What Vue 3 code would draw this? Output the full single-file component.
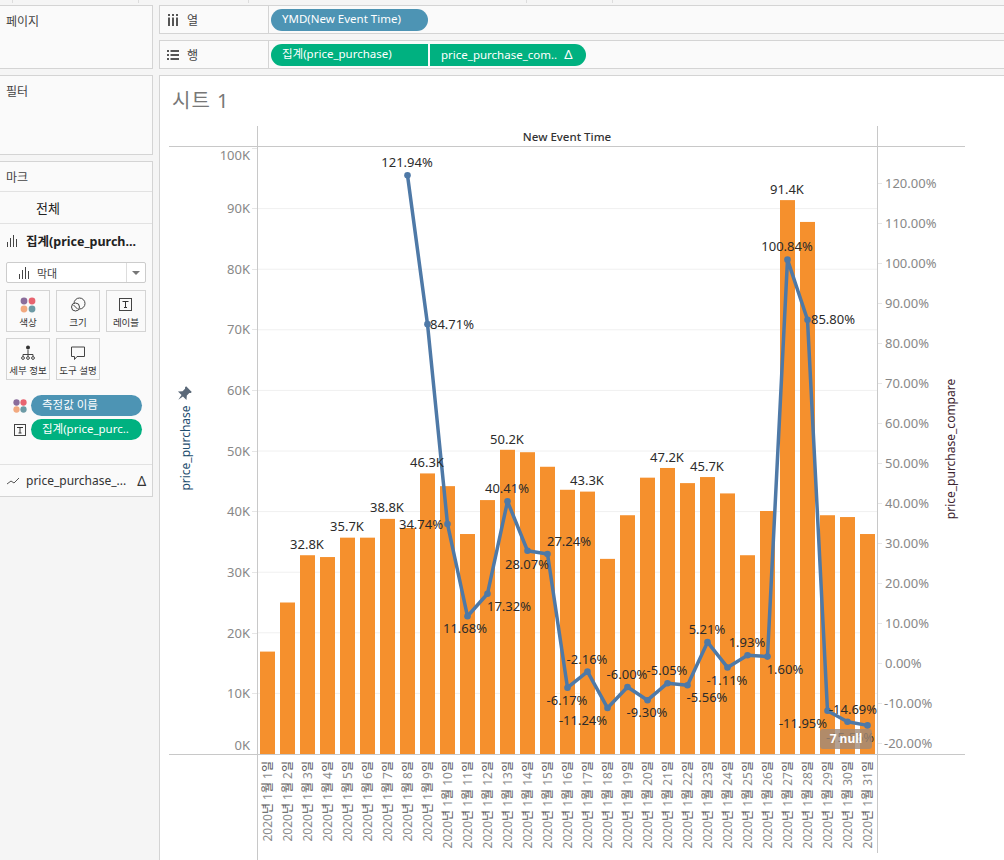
<script setup>
const KO = 60.6 / 10000
const base = 754
const values = [16900,25000,32800,32500,35700,35700,38800,37300,46300,44200,36300,41900,50200,49800,47400,43600,43300,32200,39400,45600,47200,44700,45700,43000,32800,40100,91400,87800,39400,39100,36300]
const bars = values.map((v, i) => ({ x: 260 + i * 20, y: base - v * KO, h: v * KO }))
const linePct = [121.94,84.71,34.74,11.68,17.32,40.41,28.07,27.24,-6.17,-2.16,-11.24,-6,-9.3,-5.05,-5.56,5.21,-1.11,1.93,1.6,100.84,85.8,-11.95,-14.69,-15.6]
const points = linePct.map((p, i) => ({ x: 407.5 + i * 20, y: 663 - p * 4 }))
const linePath = points.map(p => `${p.x},${p.y}`).join(' ')
const leftTicks = [['100K',155,148],['90K',208,208],['80K',269,269],['70K',329,329],['60K',390,390],['50K',451,451],['40K',511,511],['30K',572,572],['20K',633,633],['10K',693,693],['0K',745,754]]
const grid = [1,2,3,4,5,6,7,8,9].map(n => base - n * 60.6)
const rightTicks = [120,110,100,90,80,70,60,50,40,30,20,10,0,-10,-20].map(p => ({ t: p.toFixed(2) + '%', y: 663 - p * 4 }))
const labels = [
  ['32.8K',307,545],['35.7K',347,527],['38.8K',387,508],['46.3K',427,463],['50.2K',507,440],['43.3K',587,481],['47.2K',667,458],['45.7K',707,467],['91.4K',787,190],
  ['121.94%',407,163],['84.71%',452,325],['34.74%',421,525],['11.68%',465,629],['17.32%',509,607],['40.41%',507,489],['28.07%',527,565],['27.24%',569,542],
  ['-6.17%',567,701],['-2.16%',587,660],['-11.24%',583,721],['-6.00%',627,675],['-9.30%',647,713],['-5.05%',667,671],['-5.56%',707,698],['5.21%',707,630],['-1.11%',727,681],['1.93%',747,643],['1.60%',785,670],['-11.95%',803,724],['100.84%',787,247],['85.80%',833,320],['-14.69%',853,710]
]
const days = Array.from({ length: 31 }, (_, i) => ({ x: 267.5 + i * 20, d: i + 1 }))
const swatches = ['#8a6d9b', '#e8636f', '#f2a97f', '#6c9aa5']
</script>

<template>
  <div class="page">
    <div class="strip"><i></i><i></i><i></i><i></i><i></i></div>
    <div class="main">
      <aside class="side">
        <section class="panel pages"><h4>페이지</h4></section>
        <section class="panel filters"><h4>필터</h4></section>
        <section class="panel marks">
          <h4 class="marks-head">마크</h4>
          <div class="all">전체</div>
          <div class="agg">
            <svg width="12" height="14" viewBox="0 0 12 14"><path d="M1.500 8v5M4.500 4v9M7.500 1v12M10.500 5v8" stroke="#444" fill="none"/></svg>
            <b>집계(price_purch...</b>
          </div>
          <div class="mark-body">
            <div class="select">
              <svg width="12" height="14" viewBox="0 0 12 14"><path d="M1.500 8v5M4.500 4v9M7.500 1v12M10.500 5v8" stroke="#444" fill="none"/></svg>
              <span>막대</span>
              <em><u></u></em>
            </div>
            <div class="cards">
              <div class="card">
                <svg width="16" height="16" viewBox="0 0 16 16"><circle v-for="(c, n) in swatches" :key="c" :cx="4 + (n % 2) * 8" :cy="4 + (n > 1 ? 8 : 0)" r="3.4" :fill="c"/></svg>
                <span>색상</span>
              </div>
              <div class="card">
                <svg width="16" height="16" viewBox="0 0 16 16"><circle cx="9.5" cy="6.5" r="5.5" fill="none" stroke="#444"/><circle cx="5.5" cy="10" r="4" fill="#fafafa" stroke="#444"/><path d="M3.5 8l4 4" stroke="#444"/></svg>
                <span>크기</span>
              </div>
              <div class="card">
                <svg width="16" height="16" viewBox="0 0 16 16"><rect x="1.5" y="1.5" width="12" height="12" fill="none" stroke="#444"/><path d="M4.5 4.5h6M7.500 4.500v6M6 10.500h3" stroke="#333" fill="none"/></svg>
                <span>레이블</span>
              </div>
              <div class="card">
                <svg width="16" height="16" viewBox="0 0 16 16"><circle cx="8" cy="2.500" r="2" fill="#333"/><path d="M8 5v4M3 9.500h10M3 9.500v2M8 9.500v2M13 9.500v2" stroke="#444" fill="none"/><circle cx="3" cy="13" r="1.400" fill="none" stroke="#444"/><circle cx="8" cy="13" r="1.400" fill="none" stroke="#444"/><circle cx="13" cy="13" r="1.400" fill="none" stroke="#444"/></svg>
                <span>세부 정보</span>
              </div>
              <div class="card">
                <svg width="16" height="16" viewBox="0 0 16 16"><path d="M1.500 2h13v9.500H7l-2.500 3v-3h-3z" fill="none" stroke="#444"/></svg>
                <span>도구 설명</span>
              </div>
            </div>
            <div class="enc">
              <svg width="14" height="14" viewBox="0 0 16 16"><circle v-for="(c, n) in swatches" :key="c" :cx="4 + (n % 2) * 8" :cy="4 + (n > 1 ? 8 : 0)" r="3.6" :fill="c"/></svg>
              <span class="pill blue">측정값 이름</span>
            </div>
            <div class="enc">
              <svg width="14" height="14" viewBox="0 0 14 14"><rect x="1.500" y="1.500" width="11" height="11" fill="none" stroke="#444"/><path d="M4 4.500h6M7 4.500v5.500M5.500 10h3" stroke="#333" fill="none"/></svg>
              <span class="pill green">집계(price_purc..</span>
            </div>
          </div>
          <div class="line-row">
            <svg width="14" height="10" viewBox="0 0 14 10"><path d="M1 8l4-3 3 2 5-5" stroke="#555" fill="none"/></svg>
            <span>price_purchase_...</span>
            <span class="delta">Δ</span>
          </div>
        </section>
      </aside>
      <div class="content">
        <div class="shelf">
          <div class="shelf-name">
            <svg width="12" height="12" viewBox="0 0 12 12"><path d="M1 0h2v2H1zM5 0h2v2H5zM9 0h2v2H9zM1 3.500h2V12H1zM5 3.500h2V12H5zM9 3.500h2V12H9z" fill="#555"/></svg>
            <span>열</span>
          </div>
          <div class="shelf-pills"><span class="pill blue wide">YMD(New Event Time)</span></div>
        </div>
        <div class="shelf">
          <div class="shelf-name">
            <svg width="12" height="12" viewBox="0 0 12 12"><path d="M0 1h2v2H0zM3.500 1H12v2H3.500zM0 5h2v2H0zM3.500 5H12v2H3.500zM0 9h2v2H0zM3.500 9H12v2H3.500z" fill="#555"/></svg>
            <span>행</span>
          </div>
          <div class="shelf-pills">
            <span class="pill green wide join-r">집계(price_purchase)</span>
            <span class="pill green wide join-l">price_purchase_com.. <span>Δ</span></span>
          </div>
        </div>
        <main class="sheet">
          <h2>시트 1</h2>
          <svg class="chart" width="845" height="734" viewBox="159 126 845 734">
            <line v-for="g in grid" :key="g" x1="257" x2="877" :y1="g" :y2="g" stroke="#f0f0f0"/>
            <line v-for="t in leftTicks" :key="'l' + t[0]" x1="252" x2="257" :y1="t[2] + 0.5" :y2="t[2] + 0.5" stroke="#e6e6e6"/>
            <line v-for="t in rightTicks" :key="'r' + t.t" x1="878" x2="882" :y1="t.y + 0.5" :y2="t.y + 0.5" stroke="#e6e6e6"/>
            <rect v-for="(b, i) in bars" :key="i" :x="b.x" :y="b.y" width="15" :height="b.h" fill="#f5902d"/>
            <path d="M169 146.500H965M169 754.500H965M257.500 126V860M877.500 126V853" stroke="#c8c8c8" fill="none"/>
            <text x="567" y="141" text-anchor="middle" class="head">New Event Time</text>
            <text v-for="t in leftTicks" :key="t[0]" x="250" :y="t[1] + 5" text-anchor="end" class="tick">{{ t[0] }}</text>
            <text v-for="t in rightTicks" :key="t.t" :x="t.t[0] === '-' ? 884 : 885" :y="t.y + 5" class="tick">{{ t.t }}</text>
            <text text-anchor="middle" class="title-l" transform="translate(190 448) rotate(-90)">price_purchase</text>
            <text text-anchor="middle" class="title-r" transform="translate(955 449) rotate(-90)">price_purchase_compare</text>
            <path d="M-4-7H4V-5.500L3-4.500V-1L6 2.500H1L0 8-1 2.500H-6L-3-1V-4.500L-4-5.500Z" fill="#5a6878" transform="translate(184 394) rotate(45)"/>
            <text v-for="d in days" :key="d.d" :transform="`translate(${d.x + 4.500} 761) rotate(-90)`" text-anchor="end" class="day">2020<tspan class="ko">년</tspan> 1<tspan class="ko">월</tspan> {{ d.d }}<tspan class="ko">일</tspan></text>
            <polyline :points="linePath" fill="none" stroke="#4e79a7" stroke-width="3.5" stroke-linejoin="round"/>
            <circle v-for="(p, i) in points" :key="i" :cx="p.x" :cy="p.y" r="3.300" fill="#4e79a7"/>
            <text x="850" y="742" text-anchor="middle" class="val">-15.56%</text>
            <text v-for="l in labels" :key="l[0]" :x="l[1]" :y="l[2] + 4" text-anchor="middle" class="val">{{ l[0] }}</text>
            <rect x="820" y="729" width="52" height="20" rx="3" fill="#a08a78" fill-opacity="0.8"/>
            <text x="846" y="743" text-anchor="middle" class="nulls">7 null</text>
          </svg>
        </main>
      </div>
    </div>
  </div>
</template>

<style>
html, body { margin: 0; background: #f5f5f5; }
</style>

<style scoped>
.page {
  width: 1004px;
  height: 860px;
  overflow: hidden;
  background: #f5f5f5;
  font-family: "Noto Sans", "Noto Sans CJK KR", sans-serif;
  font-size: 12px;
  color: #333;
}
.strip { height: 3px; display: flex; padding-left: 12px; margin-bottom: 2px; }
.strip i { border-left: 1px solid #ddd; box-sizing: border-box; }
.strip i:nth-child(1) { width: 126px; }
.strip i:nth-child(2) { width: 110px; }
.strip i:nth-child(3) { width: 278px; }
.strip i:nth-child(4) { width: 86px; }
.strip i:nth-child(5) { width: 10px; }
.main { display: flex; gap: 6px; height: 855px; }
.side { width: 153px; display: flex; flex-direction: column; gap: 6px; flex: none; }
.panel { background: #fafafa; border: 1px solid #d4d4d4; border-left: 0; box-sizing: border-box; }
.panel h4 { margin: 0; font-weight: 400; font-size: 12px; padding: 8px 6px 0; line-height: 16px; color: #444; }
.pages { height: 64px; }
.filters { height: 80px; }
.marks { height: 336px; display: flex; flex-direction: column; }
.marks-head { height: 30px; box-sizing: border-box; border-bottom: 1px solid #e2e2e2; }
.all { height: 32px; line-height: 32px; box-sizing: border-box; padding-left: 36px; border-bottom: 1px solid #e2e2e2; color: #222; font-size: 13px; }
.agg { height: 33px; display: flex; align-items: center; gap: 8px; padding-left: 6px; color: #222; font-size: 12.500px; white-space: nowrap; }
.agg svg { flex: none; }
.mark-body { padding: 5px 6px 0; height: 208px; box-sizing: border-box; border-bottom: 1px solid #e2e2e2; }
.select { height: 21px; margin-bottom: 7px; box-sizing: border-box; border: 1px solid #ccc; border-radius: 2px; background: #fff; display: flex; align-items: center; font-size: 11px; padding-left: 11px; gap: 7px; }
.select span { flex: 1; color: #444; }
.select em { width: 18px; height: 100%; border-left: 1px solid #ddd; display: flex; align-items: center; justify-content: center; }
.select u { width: 0; height: 0; border: 4px solid transparent; border-top: 4px solid #777; border-bottom: 0; }
.cards { display: grid; grid-template-columns: 44px 44px 40px; gap: 6px; }
.card { height: 42px; box-sizing: border-box; border: 1px solid #d4d4d4; display: flex; flex-direction: column; align-items: center; padding-top: 6px; font-size: 9.500px; line-height: 13px; gap: 3px; white-space: nowrap; color: #333; }
.card svg { flex: none; }
.enc { display: flex; align-items: center; gap: 4px; margin-left: 7px; height: 21px; margin-top: 3px; }
.cards + .enc { margin-top: 15px; }
.enc svg { flex: none; }
.pill { color: #fff; border-radius: 11px; white-space: nowrap; display: block; }
.enc .pill { width: 111px; height: 21px; line-height: 19px; padding-left: 11px; box-sizing: border-box; font-size: 11.500px; }
.blue { background: #4d94b4; }
.green { background: #00b180; }
.line-row { display: flex; align-items: center; flex: 1; padding-left: 6px; gap: 6px; color: #333; white-space: nowrap; font-size: 12px; }
.delta { margin-left: 5px; font-size: 14px; }
.content { flex: 1; display: flex; flex-direction: column; gap: 6px; min-width: 0; margin-right: -3px; }
.shelf { height: 29px; display: flex; background: #fafafa; border: 1px solid #d4d4d4; border-right: 0; box-sizing: border-box; }
.shelf-name { width: 109px; box-sizing: border-box; padding-left: 7px; display: flex; align-items: center; gap: 8px; border-right: 1px solid #d4d4d4; color: #444; }
.shelf-pills { display: flex; align-items: center; gap: 2px; padding-left: 2px; }
.wide { width: 157px; height: 22px; line-height: 20px; padding-left: 11px; box-sizing: border-box; font-size: 11.500px; }
.join-r { border-radius: 11px 0 0 11px; }
.join-l { width: 156px; border-radius: 0 11px 11px 0; }
.join-l span { margin-left: 4px; font-size: 13px; }
.sheet { flex: 1; background: #fff; border: 1px solid #d4d4d4; border-bottom: 0; border-right: 0; box-sizing: border-box; min-height: 0; overflow: hidden; }
.sheet h2 { margin: 0; height: 50px; box-sizing: border-box; padding: 12px 0 0 12px; font-weight: 400; font-size: 20px; line-height: 26px; color: #777; letter-spacing: 1px; }
.chart { display: block; margin-left: -1px; }
.head { font: 500 11.500px "Noto Sans", sans-serif; fill: #333; }
.tick { font: 13px "Noto Sans", sans-serif; fill: #888; }
.title-l { font: 12px "Noto Sans", sans-serif; fill: #1f4e6f; }
.title-r { font: 12px "Noto Sans", sans-serif; fill: #3d2530; }
.day { font: 12px "Noto Sans", "Noto Sans CJK KR", sans-serif; fill: #8a8a8a; }
.ko { fill: #555; }
.val { font: 13px "Noto Sans", sans-serif; fill: #2b2b2b; }
.nulls { font: 700 12px "Noto Sans", sans-serif; fill: #fff; }
</style>
